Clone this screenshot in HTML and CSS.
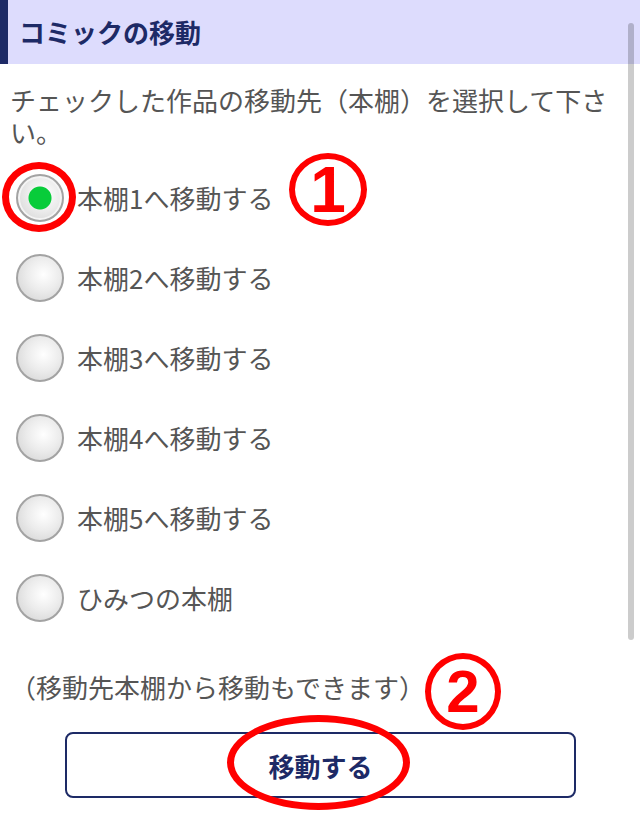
FILE: index.html
```html
<html lang="ja">
<head>
  <meta charset="UTF-8" />
  <meta name="viewport" content="width=device-width, initial-scale=1.0" />
  <title>コミックの移動</title>
  <link rel="stylesheet" href="styles.css">
</head>
<body>
  <header class="page-header">
    <h1>コミックの移動</h1>
  </header>

  <p class="lead">チェックした作品の移動先（本棚）を選択して下さい。</p>

  <form class="move-form">
    <ul class="shelf-list">
      <li class="shelf-row">
        <label class="shelf-option">
          <span class="radio-wrap marked">
            <input type="radio" name="shelf" value="1" checked>
          </span>
          <span class="shelf-name">本棚1へ移動する</span>
        </label>
        <span class="step-mark step-one">1</span>
      </li>
      <li class="shelf-row">
        <label class="shelf-option">
          <span class="radio-wrap"><input type="radio" name="shelf" value="2"></span>
          <span class="shelf-name">本棚2へ移動する</span>
        </label>
      </li>
      <li class="shelf-row">
        <label class="shelf-option">
          <span class="radio-wrap"><input type="radio" name="shelf" value="3"></span>
          <span class="shelf-name">本棚3へ移動する</span>
        </label>
      </li>
      <li class="shelf-row">
        <label class="shelf-option">
          <span class="radio-wrap"><input type="radio" name="shelf" value="4"></span>
          <span class="shelf-name">本棚4へ移動する</span>
        </label>
      </li>
      <li class="shelf-row">
        <label class="shelf-option">
          <span class="radio-wrap"><input type="radio" name="shelf" value="5"></span>
          <span class="shelf-name">本棚5へ移動する</span>
        </label>
      </li>
      <li class="shelf-row">
        <label class="shelf-option">
          <span class="radio-wrap"><input type="radio" name="shelf" value="secret"></span>
          <span class="shelf-name">ひみつの本棚</span>
        </label>
      </li>
    </ul>

    <p class="note">（移動先本棚から移動もできます）<span class="step-mark step-two">2</span></p>

    <div class="actions">
      <button type="button" class="move-btn">移動する</button>
      <span class="btn-ring"></span>
    </div>
  </form>

  <div class="scroll-thumb"></div>
</body>
</html>
```

FILE: styles.css
```css
:root {
  --navy: #1d2a66;
  --header-bg: #dddcfd;
  --text: #555555;
  --mark: #ff0000;
  --check: #08cc3a;
}

body {
  margin: 0;
  width: 640px;
  font-family: "Noto Sans CJK JP", "Noto Sans", sans-serif;
  color: var(--text);
  background: #ffffff;
}

.page-header {
  height: 64px;
  display: flex;
  align-items: center;
  background: var(--header-bg);
  border-left: 8px solid var(--navy);
  padding-left: 11px;
}

.page-header h1 {
  margin: 0;
  font-size: 26px;
  font-weight: bold;
  line-height: 32px;
  color: var(--navy);
}

.lead {
  margin: 20px 0 0 0;
  padding: 0 10px;
  font-size: 26px;
  line-height: 32px;
}

.shelf-list {
  list-style: none;
  margin: 10px 0 0 0;
  padding: 0;
}

.shelf-row {
  position: relative;
  height: 80px;
  display: flex;
  align-items: center;
}

.shelf-option {
  display: flex;
  align-items: center;
  gap: 13px;
  padding-left: 16px;
}

.radio-wrap {
  position: relative;
  width: 48px;
  height: 48px;
  display: block;
}

.radio-wrap input {
  appearance: none;
  -webkit-appearance: none;
  margin: 0;
  width: 48px;
  height: 48px;
  box-sizing: border-box;
  border-radius: 50%;
  border: 2px solid #a3a3a3;
  background: radial-gradient(circle at 58% 42%, #ffffff 0%, #ececec 45%, #cfcfcf 100%);
  display: block;
}

.radio-wrap input:checked {
  box-shadow: inset 0 0 0 2px #f4f4f4;
  background:
    radial-gradient(circle, var(--check) 0, var(--check) 11px, transparent 12px),
    radial-gradient(circle at 58% 42%, #ffffff 0%, #ececec 45%, #cfcfcf 100%);
}

.radio-wrap.marked::after {
  content: "";
  position: absolute;
  left: -14px;
  top: -12px;
  width: 60px;
  height: 56px;
  border: 7px solid var(--mark);
  border-radius: 50%;
}

.shelf-name {
  font-size: 26px;
  line-height: 32px;
}

.step-mark {
  position: absolute;
  box-sizing: border-box;
  border: 6px solid var(--mark);
  border-radius: 50%;
  color: var(--mark);
  font-family: "Liberation Sans", Arial, sans-serif;
  font-weight: bold;
  display: flex;
  align-items: center;
  justify-content: center;
}

.step-one {
  left: 289px;
  top: -5px;
  width: 78px;
  height: 73px;
  font-size: 64px;
}

.note {
  position: relative;
  margin: 33px 0 0 0;
  padding-left: 10px;
  font-size: 26px;
  line-height: 32px;
}

.step-two {
  left: 425px;
  top: -18px;
  width: 76px;
  height: 77px;
  font-size: 60px;
}

.actions {
  position: relative;
  margin: 29px 64px 0 65px;
}

.move-btn {
  width: 100%;
  height: 66px;
  background: #ffffff;
  border: 2px solid var(--navy);
  border-radius: 8px;
  font-family: inherit;
  font-size: 26px;
  font-weight: bold;
  color: var(--navy);
  display: block;
}

.btn-ring {
  position: absolute;
  left: 162px;
  top: -17px;
  width: 169px;
  height: 81px;
  border: 7px solid var(--mark);
  border-radius: 50%;
}

.scroll-thumb {
  position: fixed;
  left: 628px;
  top: 23px;
  width: 6px;
  height: 617px;
  border-radius: 3px;
  background: rgba(0, 0, 0, 0.2);
}
```
